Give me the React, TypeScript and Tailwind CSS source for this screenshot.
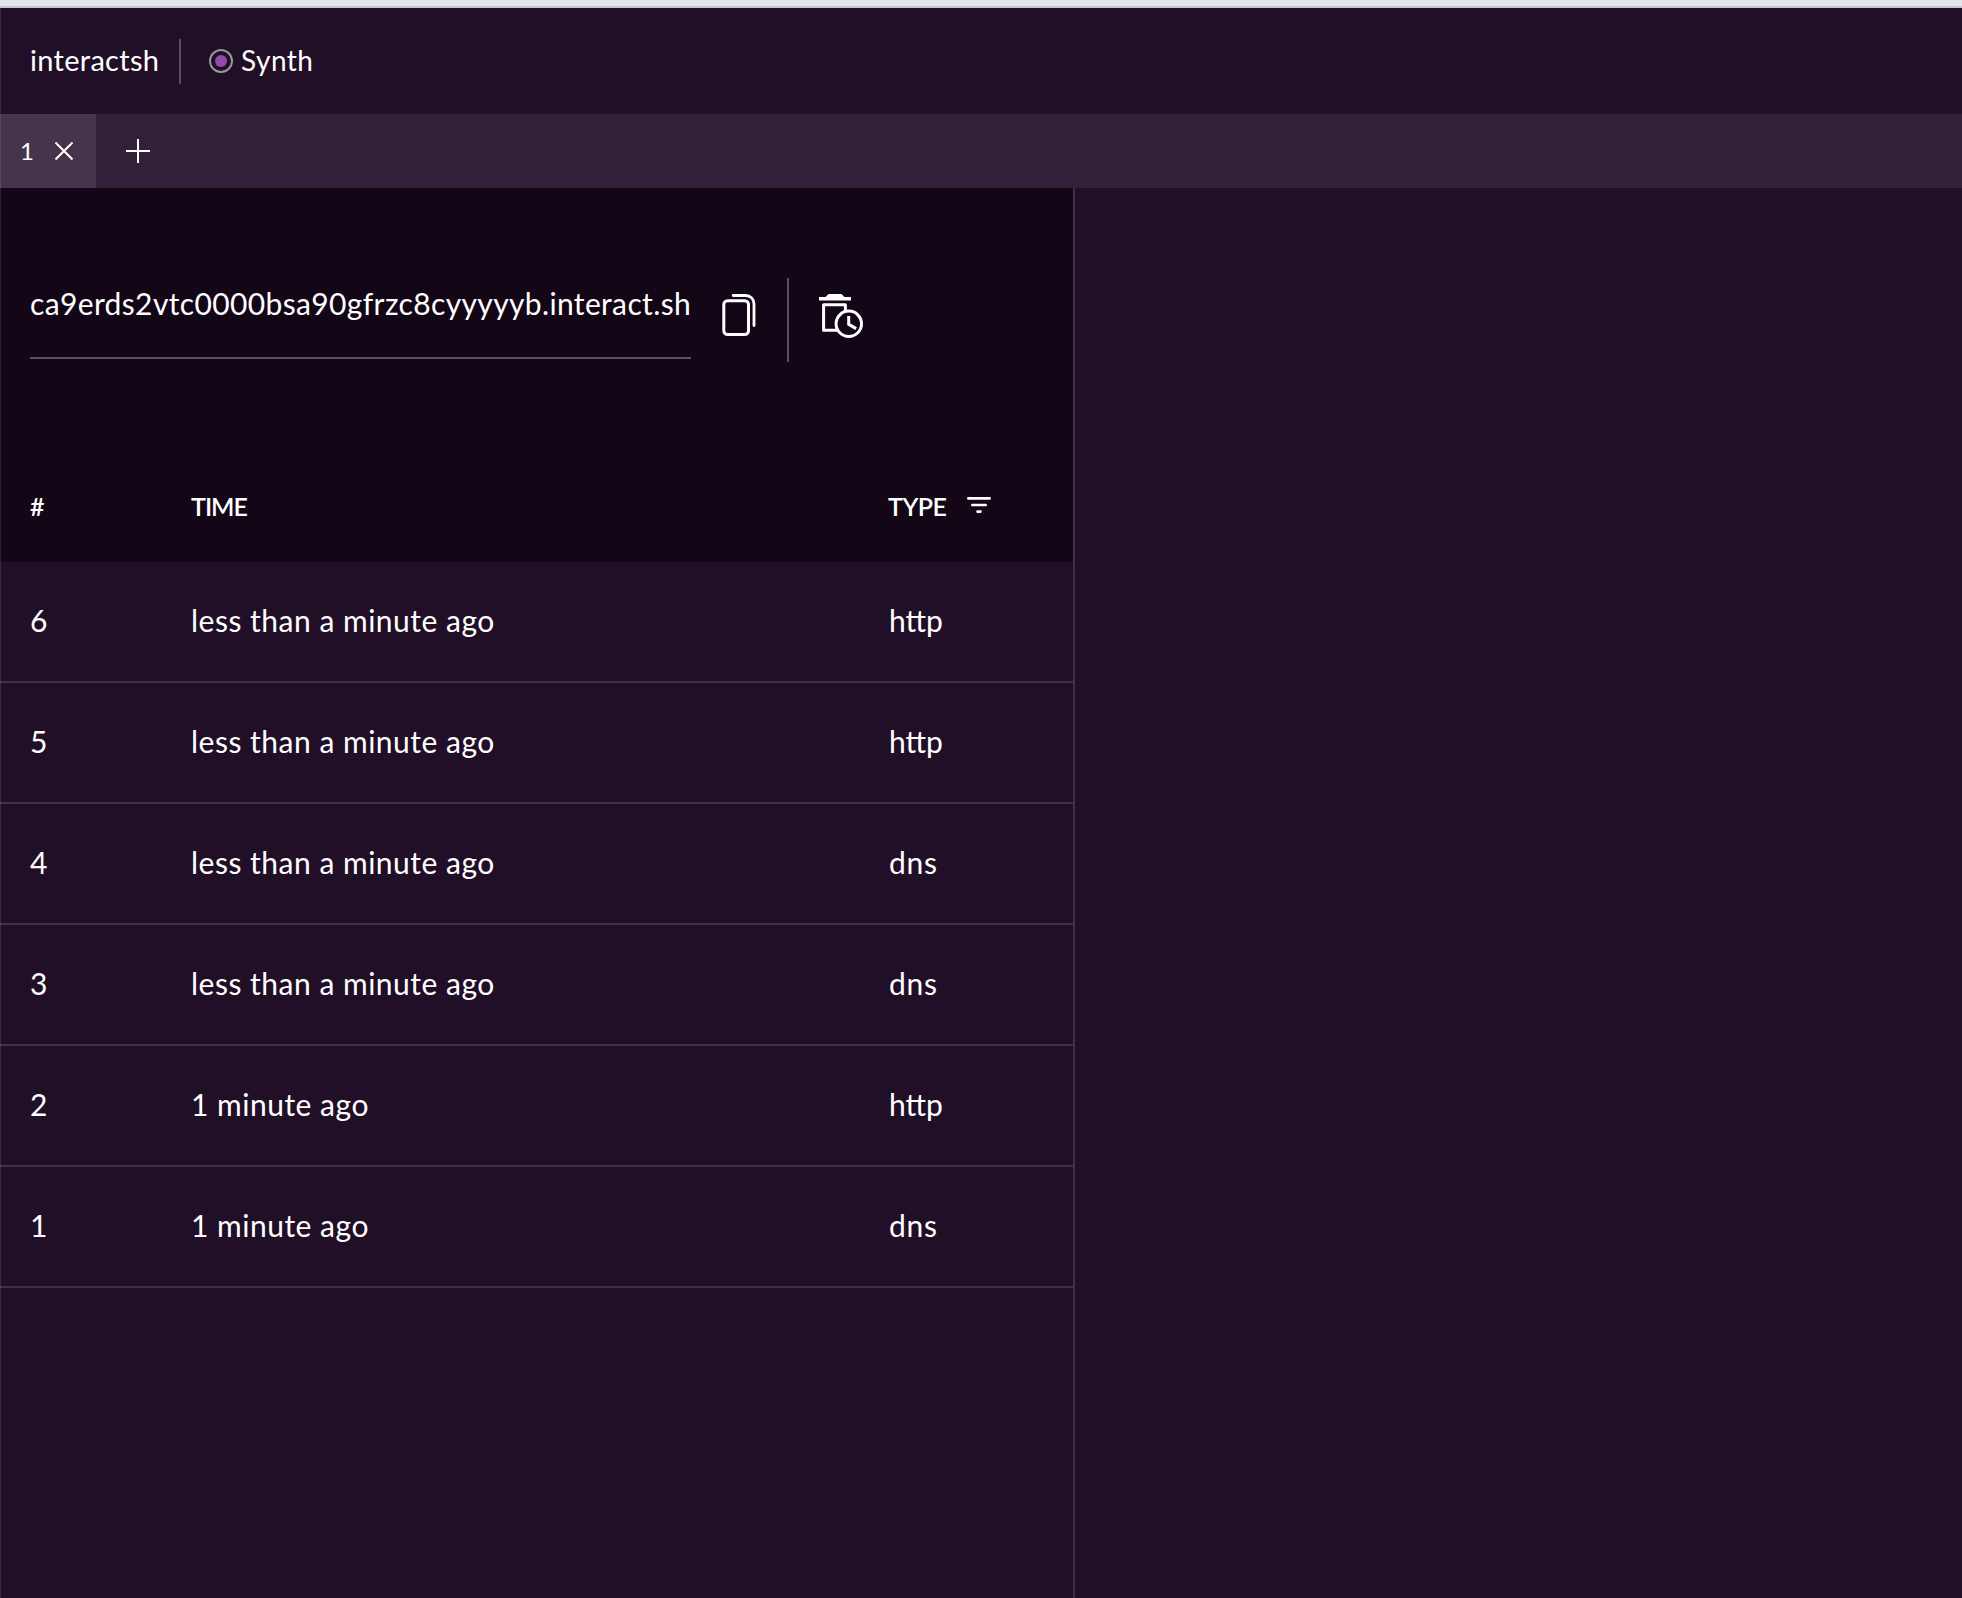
const rows = [
  { id: 6, time: "less than a minute ago", type: "http" },
  { id: 5, time: "less than a minute ago", type: "http" },
  { id: 4, time: "less than a minute ago", type: "dns" },
  { id: 3, time: "less than a minute ago", type: "dns" },
  { id: 2, time: "1 minute ago", type: "http" },
  { id: 1, time: "1 minute ago", type: "dns" },
];

function CopyIcon() {
  return (
    <svg className="mt-[33px] ml-[31px] h-[44px] w-[34px] shrink-0" viewBox="0 0 34 44" fill="none" stroke="#fff" strokeWidth="3" strokeLinecap="round">
      <rect x="1.8" y="6.8" width="24.7" height="33.7" rx="3.8" />
      <path d="M11.2 1.5H23.5C28.5 1.5 32 5 32 10V31.5" strokeWidth="2.8" />
    </svg>
  );
}

function TrashClockIcon() {
  return (
    <svg className="mt-[33px] ml-[30px] h-[46px] w-[46px] shrink-0" viewBox="0 0 46 46" fill="none" stroke="#fff" strokeWidth="3">
      <path d="M0 3H6.5L9.5 0H22.5L25.5 3H32V6.4H0Z" fill="#fff" stroke="none" />
      <path d="M26.4 17V10.8H4.6V36.2H18" strokeLinejoin="round" />
      <circle cx="29.8" cy="29.8" r="12.7" />
      <path d="M29.7 22V30.4L37.2 34.6" />
    </svg>
  );
}

export default function App() {
  return (
    <div className="relative flex h-[1598px] w-[1962px] flex-col overflow-hidden bg-[#210f28] font-['Lato',sans-serif] text-white">
      <div className="h-2 shrink-0 border-b-2 border-[#c6c7cd] bg-[#e3e5ea]" />
      <header className="flex h-[106px] shrink-0 items-center pl-[30px]">
        <span className="-mt-0.5 w-[149px] text-[29px] leading-[40px] tracking-[0.3px]">interactsh</span>
        <span className="h-[45px] w-[2px] bg-[#5c4b61]" />
        <span className="ml-[28px] flex size-6 items-center justify-center rounded-full border-2 border-[#979797]">
          <span className="size-3 rounded-full bg-[#8e4cb0]" />
        </span>
        <span className="-mt-0.5 ml-[8px] text-[28px] leading-[40px] tracking-[0.5px]">Synth</span>
      </header>
      <nav className="flex h-[74px] shrink-0 bg-[#321f39]">
        <div className="flex w-[96px] items-center bg-[#46344c] pl-[20px]">
          <span className="w-[35px] text-[24px] leading-8">1</span>
          <svg className="h-[18px] w-[18px]" viewBox="0 0 18 18" stroke="#fff" strokeWidth="2">
            <path d="M0.5 0.5L17.5 17.5M17.5 0.5L0.5 17.5" />
          </svg>
        </div>
        <svg className="mt-[25px] ml-[30px] size-6" viewBox="0 0 24 24" stroke="#fff" strokeWidth="2">
          <path d="M0 12H24M12 0V24" />
        </svg>
      </nav>
      <main className="flex min-h-0 flex-1">
        <section className="w-[1075px] shrink-0 border-r-2 border-[#412f46]">
          <div className="flex h-[374px] flex-col justify-between bg-[#130617]">
            <div className="flex pt-[73px] pl-[30px]">
              <div className="mt-[17px] h-[81px] w-[661px] border-b-2 border-[#5a505d] pt-[5px] text-[30px] leading-[40px] tracking-[0.36px] whitespace-nowrap">ca9erds2vtc0000bsa90gfrzc8cyyyyyb.interact.sh</div>
              <CopyIcon />
              <span className="mt-[17px] ml-[31px] h-[84px] w-[2px] bg-[#5a505d]" />
              <TrashClockIcon />
            </div>
            <div className="flex h-[110px] items-center pl-[30px] text-[25px] font-semibold">
              <span className="w-[161px]">#</span>
              <span className="w-[697px] tracking-[-1px]">TIME</span>
              <span className="w-[79px] tracking-[-0.5px]">TYPE</span>
              <svg className="-mt-1 h-4 w-6" viewBox="0 0 24 16" stroke="#fff" strokeWidth="2.6" strokeLinecap="round">
                <path d="M1.3 1.4H22.7M5.3 8H18.7M10.5 14.6H13.5" />
              </svg>
            </div>
          </div>
          {rows.map((r) => (
            <div key={r.id} className="flex h-[121px] items-center border-b-2 border-[#412f46] pb-0.5 pl-[30px] text-[30px]">
              <span className="w-[161px]">{r.id}</span>
              <span className="w-[698px] tracking-[0.5px]">{r.time}</span>
              <span className={r.type === "dns" ? "tracking-[0.7px]" : ""}>{r.type}</span>
            </div>
          ))}
        </section>
      </main>
      <div className="absolute top-2 bottom-0 left-0 w-px bg-white/10" />
    </div>
  );
}
